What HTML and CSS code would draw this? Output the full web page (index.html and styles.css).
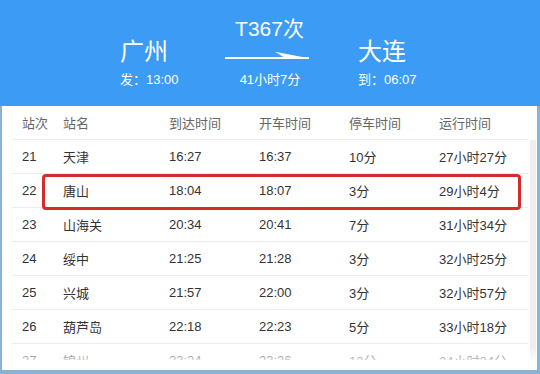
FILE: index.html
```html
<!DOCTYPE html>
<html lang="zh-CN">
<head>
<meta charset="utf-8">
<title>T367次 广州-大连</title>
<link rel="stylesheet" href="styles.css">
</head>
<body>
<div class="card">
  <header class="hero">
    <div class="route">
      <div class="end">
        <div class="city">广州</div>
        <div class="sub">发：13:00</div>
      </div>
      <div class="mid">
        <div class="train">T367次</div>
        <svg class="arrow" width="85" height="28" viewBox="0 0 85 28">
          <rect x="0" y="16" width="84" height="2" fill="#ffffff"/>
          <polygon points="50,10.7 85,17.5 60,17" fill="#ffffff"/>
        </svg>
        <div class="sub">41小时7分</div>
      </div>
      <div class="end">
        <div class="city">大连</div>
        <div class="sub">到：06:07</div>
      </div>
    </div>
  </header>
  <section class="body">
    <div class="row head">
      <span>站次</span><span>站名</span><span>到达时间</span><span>开车时间</span><span>停车时间</span><span>运行时间</span>
    </div>
    <div class="scroll">
      <div class="rows">
        <div class="row"><span>21</span><span>天津</span><span>16:27</span><span>16:37</span><span>10分</span><span>27小时27分</span></div>
        <div class="row mark"><span>22</span><span>唐山</span><span>18:04</span><span>18:07</span><span>3分</span><span>29小时4分</span></div>
        <div class="row"><span>23</span><span>山海关</span><span>20:34</span><span>20:41</span><span>7分</span><span>31小时34分</span></div>
        <div class="row"><span>24</span><span>绥中</span><span>21:25</span><span>21:28</span><span>3分</span><span>32小时25分</span></div>
        <div class="row"><span>25</span><span>兴城</span><span>21:57</span><span>22:00</span><span>3分</span><span>32小时57分</span></div>
        <div class="row"><span>26</span><span>葫芦岛</span><span>22:18</span><span>22:23</span><span>5分</span><span>33小时18分</span></div>
        <div class="row"><span>27</span><span>锦州</span><span>23:24</span><span>23:36</span><span>12分</span><span>34小时24分</span></div>
      </div>
      <div class="track"></div>
    </div>
  </section>
</div>
</body>
</html>
```
FILE: styles.css
```css
* { box-sizing: border-box; }
html, body { margin: 0; padding: 0; background: #ffffff; }
body {
  font-family: "Liberation Sans", "Noto Sans CJK SC", sans-serif;
  width: 540px;
  height: 374px;
  overflow: hidden;
}
.card { width: 540px; height: 374px; display: flex; flex-direction: column; }

.hero {
  flex: none;
  height: 106px;
  background: #3c9bf4;
  color: #ffffff;
  padding-top: 17px;
}
.route {
  display: flex;
  justify-content: center;
  align-items: flex-end;
}
.end { width: 62px; display: flex; flex-direction: column; }
.end:first-child { margin-right: 43px; }
.end:last-child { margin-left: 48px; }
.city {
  font-family: "Noto Sans CJK SC", sans-serif;
  font-size: 24px;
  line-height: 30px;
  height: 30px;
  margin-bottom: 4px;
}
.sub {
  font-size: 13px;
  line-height: 22px;
  white-space: nowrap;
}
.mid { width: 85px; display: flex; flex-direction: column; align-items: center; }
.train { font-size: 21px; line-height: 24px; margin-left: 4px; }
.arrow { display: block; }
.mid .sub { margin-left: 5px; }

.body {
  flex: 1;
  min-height: 0;
  overflow: hidden;
  border-left: 2px solid #86b3d6;
  border-right: 3px solid #86b3d6;
  border-bottom: 4px solid #86b3d6;
  padding-bottom: 10px;
  display: flex;
  flex-direction: column;
}
.row {
  flex: none;
  width: 516px;
  height: 34px;
  margin-left: 10px;
  padding-left: 10px;
  display: grid;
  grid-template-columns: 41px 106px 90px 90px 90px 1fr;
  align-items: center;
  border-bottom: 1px solid #ececec;
  font-size: 13px;
  color: #333333;
  white-space: nowrap;
}
.row.head { color: #666666; }
.scroll {
  flex: 1;
  min-height: 0;
  display: flex;
  overflow: hidden;
  position: relative;
}
.scroll::after {
  content: "";
  position: absolute;
  left: 0;
  right: 0;
  bottom: 0;
  height: 12px;
  background: linear-gradient(to bottom, rgba(255,255,255,0.1), rgba(255,255,255,0.75));
}
.rows { width: 526px; flex: none; }
.track { width: 6px; margin-left: 2px; background: #eeeeee; }
.mark { position: relative; }
.mark::after {
  content: "";
  position: absolute;
  left: 30px;
  top: 0;
  width: 473px;
  height: 30px;
  border: 3px solid #d42b2b;
  border-radius: 4px;
}
```
